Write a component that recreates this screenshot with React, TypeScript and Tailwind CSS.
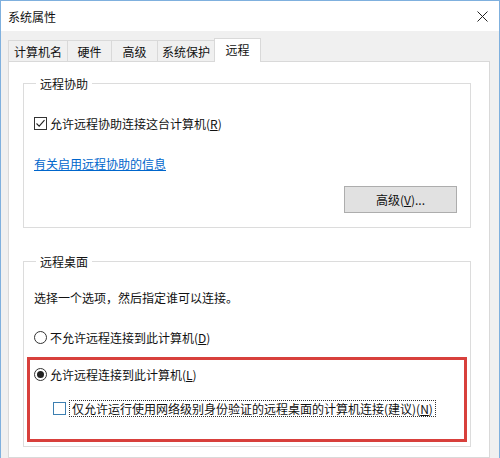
import React from "react";

const font = { fontFamily: '"Noto Sans CJK SC", "Noto Sans", sans-serif' };

function CheckBox({ checked, blue }: { checked?: boolean; blue?: boolean }) {
  return (
    <span
      className={`inline-flex w-[13px] h-[13px] shrink-0 items-center justify-center bg-white border ${
        blue ? "border-[#3c7fb1]" : "border-[#333333]"
      }`}
    >
      {checked && (
        <svg width="11" height="11" viewBox="0 0 11 11">
          <path d="M1.5 5.5 L4.2 8.2 L9.5 2.2" fill="none" stroke="#222" strokeWidth="1.1" />
        </svg>
      )}
    </span>
  );
}

function Radio({ checked }: { checked?: boolean }) {
  return (
    <span className="inline-flex w-[13px] h-[13px] shrink-0 items-center justify-center rounded-full bg-white border border-[#333333]">
      {checked && <span className="block w-[7px] h-[7px] rounded-full bg-[#222]" />}
    </span>
  );
}

export default function App() {
  return (
    <div
      className="w-[500px] h-[458px] overflow-hidden flex flex-col border-l border-r border-t border-[#7fb0de] text-[12px] leading-[17px] text-[#111]"
      style={font}
    >
      {/* title bar */}
      <div className="h-[30px] shrink-0 bg-white flex items-center justify-between pl-[7px] pr-[11px]">
        <span className="text-[12px]">系统属性</span>
        <svg width="11" height="11" viewBox="0 0 11 11">
          <path d="M0.5 0.5 L10.5 10.5 M10.5 0.5 L0.5 10.5" stroke="#222" strokeWidth="1" />
        </svg>
      </div>

      {/* body */}
      <div className="flex-1 bg-[#f0f0f0] flex flex-col pt-[7px]">
        {/* tabs */}
        <div className="flex items-end h-[23px] pl-[7px]">
          <div className="w-[60px] h-[21px] border-t border-l border-r border-[#d9d9d9] bg-[#f0f0f0] flex items-center justify-center">
            计算机名
          </div>
          <div className="w-[45px] h-[21px] -ml-px border-t border-l border-r border-[#d9d9d9] bg-[#f0f0f0] flex items-center justify-center">
            硬件
          </div>
          <div className="w-[47px] h-[21px] -ml-px border-t border-l border-r border-[#d9d9d9] bg-[#f0f0f0] flex items-center justify-center">
            高级
          </div>
          <div className="w-[58px] h-[21px] -ml-px border-t border-l border-r border-[#d9d9d9] bg-[#f0f0f0] flex items-center justify-center">
            系统保护
          </div>
          <div className="relative z-10 w-[47px] h-[24px] -ml-px -mb-px border-t border-l border-r border-[#d9d9d9] bg-white flex items-center justify-center pb-[2px]">
            远程
          </div>
        </div>

        {/* panel */}
        <div className="flex-1 ml-[7px] mr-[9px] bg-white border border-[#d9d9d9] pl-[14px] pr-[18px] flex flex-col">
          {/* group 1 */}
          <fieldset className="mt-[13px] border border-[#dcdcdc] pl-[10px] pr-[13px] pb-[14px] flex flex-col">
            <legend className="ml-[2px] px-[4px] leading-[17px]">远程协助</legend>
            <div className="mt-[23px] h-[16px] flex items-center gap-[3px]">
              <CheckBox checked />
              <span>
                允许远程协助连接这台计算机(<span className="underline">R</span>)
              </span>
            </div>
            <div className="mt-[24px] h-[16px] flex items-center">
              <span className="text-[#0066cc] underline">有关启用远程协助的信息</span>
            </div>
            <div className="mt-[15px] flex justify-end">
              <div className="w-[113px] h-[27px] bg-[#e1e1e1] border border-[#adadad] flex items-center justify-center">
                高级(<span className="underline">V</span>)...
              </div>
            </div>
          </fieldset>

          {/* group 2 */}
          <fieldset className="mt-[25px] border border-[#dcdcdc] pl-[10px] pr-[13px] pb-[30px] flex flex-col">
            <legend className="ml-[2px] px-[4px] leading-[17px]">远程桌面</legend>
            <div className="mt-[19px] h-[16px] flex items-center">选择一个选项，然后指定谁可以连接。</div>
            <div className="mt-[24px] h-[16px] flex items-center gap-[3px]">
              <Radio />
              <span>
                不允许远程连接到此计算机(<span className="underline">D</span>)
              </span>
            </div>
            <div className="relative mt-[21px] flex flex-col">
              <div className="h-[16px] flex items-center gap-[3px]">
                <Radio checked />
                <span>
                  允许远程连接到此计算机(<span className="underline">L</span>)
                </span>
              </div>
              <div className="mt-[18px] ml-[19px] h-[16px] flex items-center gap-[3px]">
                <CheckBox blue />
                <span className="border border-dotted border-[#333] px-[2px] leading-[15px]">
                  仅允许运行使用网络级别身份验证的远程桌面的计算机连接(建议)(<span className="underline">N</span>)
                </span>
              </div>
              <div className="absolute left-[-7px] top-[-9px] w-[440px] h-[85px] border-[3px] border-[#d8403c] pointer-events-none" />
            </div>
          </fieldset>
        </div>
      </div>
    </div>
  );
}
